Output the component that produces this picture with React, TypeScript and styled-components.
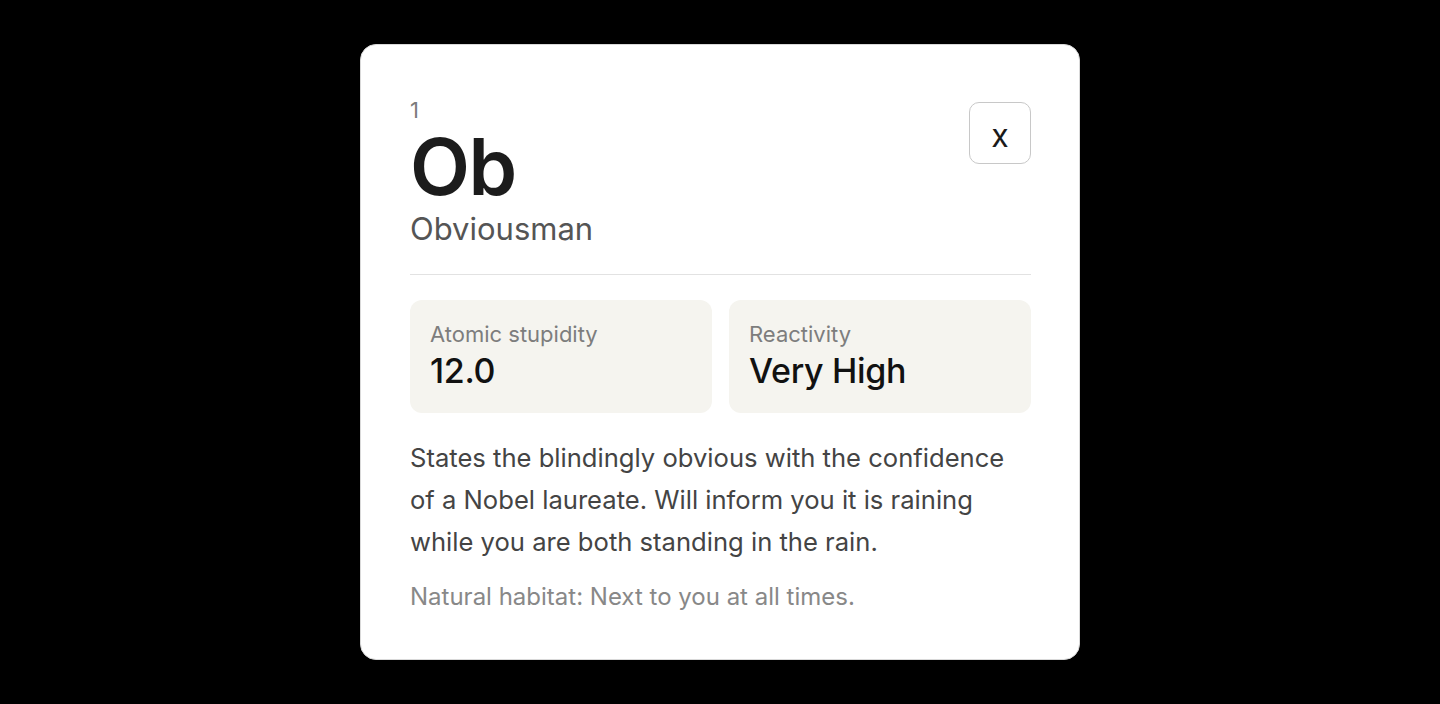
import React from 'react';
import styled, { createGlobalStyle } from 'styled-components';

const GlobalStyle = createGlobalStyle`
  html, body {
    margin: 0;
    padding: 0;
    background: #000;
  }
  body {
    font-family: Inter, "Noto Sans", "Liberation Sans", sans-serif;
  }
`;

interface Stat {
  label: string;
  value: string;
}

const stats: Stat[] = [
  { label: 'Atomic stupidity', value: '12.0' },
  { label: 'Reactivity', value: 'Very High' }
];

const App: React.FC = () => (
  <>
    <GlobalStyle />
    <Page>
      <Card>
        <Header>
          <Title>
            <Number>1</Number>
            <Symbol>Ob</Symbol>
            <Name>Obviousman</Name>
          </Title>
          <Close type='button' aria-label='Close'>x</Close>
        </Header>
        <Divider />
        <Stats>
          {stats.map(s => (
            <StatBox key={s.label}>
              <Label>{s.label}</Label>
              <Value>{s.value}</Value>
            </StatBox>
          ))}
        </Stats>
        <Description>
          States the blindingly obvious with the confidence of a Nobel laureate. Will inform you it is
          raining while you are both standing in the rain.
        </Description>
        <Habitat>Natural habitat: Next to you at all times.</Habitat>
      </Card>
    </Page>
  </>
);

export default App;

const Page = styled.div`
  min-height: 100vh;
  display: flex;
  align-items: center;
  justify-content: center;
`;

const Card = styled.div`
  box-sizing: border-box;
  width: 720px;
  padding: 49px 48px 46px 49px;
  background: #fff;
  border: 1px solid #d9d9d9;
  border-radius: 16px;
`;

const Header = styled.div`
  display: flex;
  justify-content: space-between;
  align-items: flex-start;
`;

const Title = styled.div`
  display: flex;
  flex-direction: column;
`;

const Number = styled.div`
  margin-top: 5px;
  font-size: 22px;
  line-height: 22px;
  color: #7c7c7c;
`;

const Symbol = styled.div`
  margin-top: 0;
  font-size: 78px;
  line-height: 92px;
  font-weight: 600;
  letter-spacing: -1.5px;
  color: #1c1c1c;
`;

const Name = styled.div`
  margin-top: 1px;
  font-size: 31px;
  line-height: 30px;
  color: #555;
`;

const Close = styled.button`
  box-sizing: border-box;
  width: 62px;
  height: 62px;
  margin-top: 8px;
  display: flex;
  align-items: center;
  justify-content: center;
  padding: 4px 0 0;
  background: #fff;
  border: 1.5px solid #c8c8c8;
  border-radius: 10px;
  font-family: inherit;
  font-size: 32px;
  color: #1a1a1a;
  cursor: pointer;
`;

const Divider = styled.hr`
  margin: 30px 0 0;
  border: none;
  border-top: 1.5px solid #e2e2e2;
`;

const Stats = styled.div`
  margin-top: 25px;
  display: grid;
  grid-template-columns: 1fr 1fr;
  gap: 17px;
`;

const StatBox = styled.div`
  padding: 20px 20px 22px;
  background: #f5f4ef;
  border-radius: 12px;
`;

const Label = styled.div`
  font-size: 22px;
  line-height: 28px;
  color: #7d7d7d;
`;

const Value = styled.div`
  margin-top: 3px;
  font-size: 34px;
  line-height: 40px;
  font-weight: 500;
  letter-spacing: -0.3px;
  color: #111;
`;

const Description = styled.p`
  max-width: 610px;
  margin: 24px 0 0;
  font-size: 25.6px;
  line-height: 42px;
  color: #444;
`;

const Habitat = styled.p`
  margin: 18px 0 0;
  font-size: 24px;
  line-height: 32px;
  color: #888;
`;
